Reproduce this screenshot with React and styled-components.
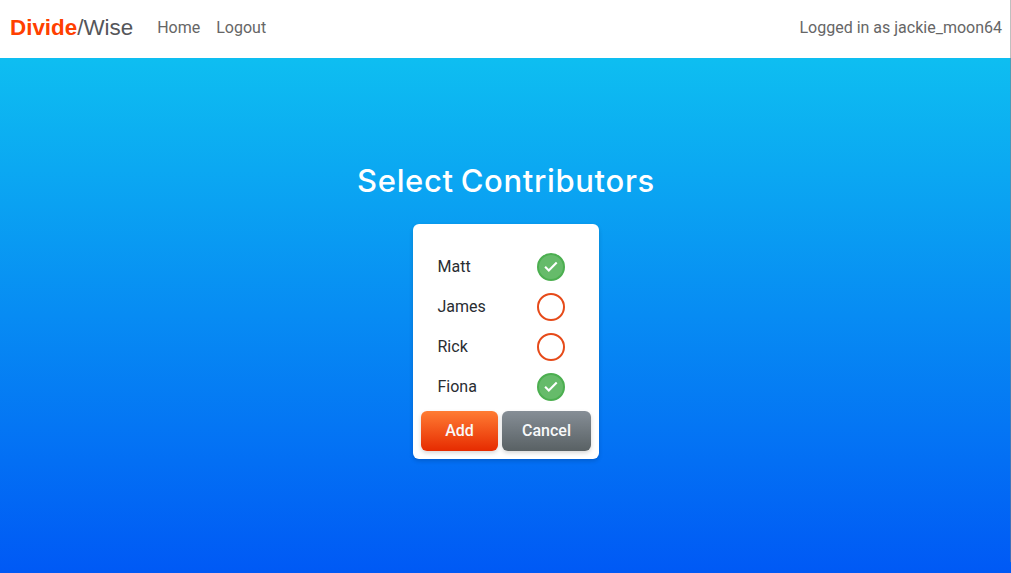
import React, { useState } from "react";
import styled, { createGlobalStyle } from "styled-components";

const GlobalStyle = createGlobalStyle`
  *, *::before, *::after { box-sizing: border-box; }
  body {
    margin: 0;
    overflow: hidden;
    font-family: Roboto, sans-serif;
    font-size: 16px;
    line-height: 24px;
    color: #292d32;
  }
  button { font-family: inherit; }
`;

const Page = styled.div`
  display: flex;
  flex-direction: column;
  height: 100vh;
  background: linear-gradient(#0ebef1 58px, #0059f5 100%);
`;

/* Thin scroll track lying over the right edge of the page */
const ScrollEdge = styled.div`
  position: fixed;
  top: 0;
  right: 0;
  bottom: 11px;
  width: 1px;
  background: rgba(128, 128, 128, 0.5);
`;

const Navbar = styled.header`
  display: flex;
  align-items: center;
  flex: none;
  height: 58px;
  padding: 0 9px 3px 10px;
  background: #fff;
  color: #666;
`;

const Brand = styled.a`
  margin-right: 16px;
  font: 22.4px/34px "Liberation Sans", Arial, sans-serif;
  color: #55565a;
`;

const BrandAccent = styled.strong`
  color: #ff4000;
`;

const NavLinks = styled.nav`
  display: flex;
`;

const NavLink = styled.a`
  padding: 0 8px;
`;

const UserLabel = styled.span`
  margin-left: auto;
`;

const Main = styled.main`
  display: flex;
  flex-direction: column;
  align-items: center;
  padding: 103px 0 0 1px;
`;

const Title = styled.h1`
  margin: 0 0 24px;
  font: 500 31px/39px Inter, sans-serif;
  letter-spacing: 0.66px;
  word-spacing: -2px;
  color: #fff;
`;

const Card = styled.section`
  width: 186px;
  height: 235px;
  padding: 23px 8px 8px;
  border-radius: 6px;
  background: #fff;
  box-shadow: 0 2px 4px rgba(0, 0, 0, 0.16);
`;

const Row = styled.div`
  display: flex;
  align-items: center;
  justify-content: space-between;
  height: 40px;
  padding: 0 26px 0 16.5px;
`;

const Toggle = styled.button`
  display: flex;
  align-items: center;
  justify-content: center;
  width: 28px;
  height: 28px;
  padding: 0;
  border: 2px solid ${({ $checked }) => ($checked ? "#4caf50" : "#e64a19")};
  border-radius: 50%;
  background: ${({ $checked }) => ($checked ? "#66bb6a" : "#fff")};
`;

const Actions = styled.div`
  display: flex;
  gap: 4px;
  margin-top: 4px;
`;

const Button = styled.button`
  width: ${({ $width }) => $width}px;
  height: 40px;
  padding: 0;
  border: 0;
  border-radius: 6px;
  background: ${({ $variant }) =>
    $variant === "primary"
      ? "linear-gradient(#ff7c33, #e62b00)"
      : "linear-gradient(#868e96, #596164)"};
  box-shadow: 0 2px 4px rgba(0, 0, 0, 0.16);
  color: #f8f9fa;
  font-size: 16px;
  font-weight: 500;
  line-height: 24px;
`;

function CheckMark() {
  return (
    <svg width="14" height="12" viewBox="0 0 14 12" aria-hidden="true">
      <path d="M1.1 5.7 L4.8 9.4 L12.7 1.5" fill="none" stroke="#fff" strokeWidth="2.1" />
    </svg>
  );
}

const initialPeople = [
  { name: "Matt", checked: true },
  { name: "James", checked: false },
  { name: "Rick", checked: false },
  { name: "Fiona", checked: true },
];

export default function App() {
  const [people, setPeople] = useState(initialPeople);
  const toggle = (name) =>
    setPeople((list) =>
      list.map((p) => (p.name === name ? { ...p, checked: !p.checked } : p))
    );

  return (
    <Page>
      <GlobalStyle />
      <Navbar>
        <Brand>
          <BrandAccent>Divide</BrandAccent>/Wise
        </Brand>
        <NavLinks>
          <NavLink>Home</NavLink>
          <NavLink>Logout</NavLink>
        </NavLinks>
        <UserLabel>Logged in as jackie_moon64</UserLabel>
      </Navbar>
      <Main>
        <Title>Select Contributors</Title>
        <Card>
          {people.map(({ name, checked }) => (
            <Row key={name}>
              <span>{name}</span>
              <Toggle
                $checked={checked}
                role="checkbox"
                aria-checked={checked}
                aria-label={name}
                onClick={() => toggle(name)}
              >
                {checked && <CheckMark />}
              </Toggle>
            </Row>
          ))}
          <Actions>
            <Button $variant="primary" $width={77}>Add</Button>
            <Button $variant="secondary" $width={89}>Cancel</Button>
          </Actions>
        </Card>
      </Main>
      <ScrollEdge />
    </Page>
  );
}
